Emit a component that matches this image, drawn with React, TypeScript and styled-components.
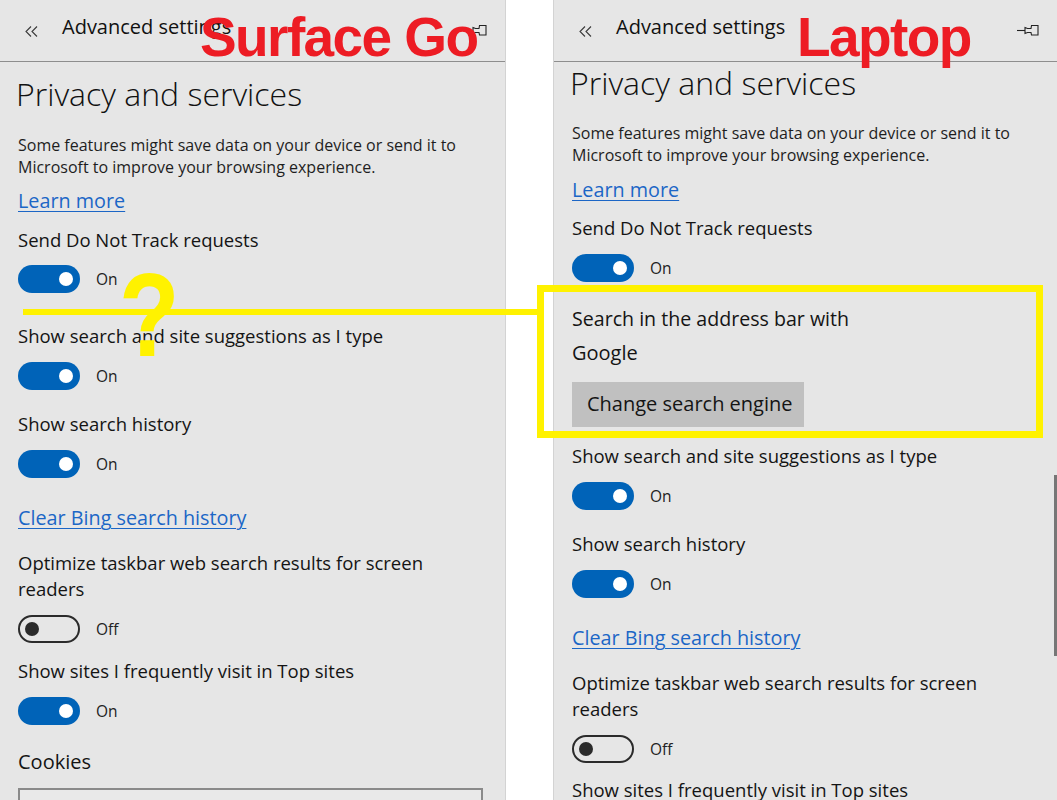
import React from "react";
import styled, { createGlobalStyle } from "styled-components";

const Global = createGlobalStyle`
  html, body { margin: 0; padding: 0; background: #ffffff; }
  body { font-family: "Open Sans", "Noto Sans", sans-serif; color: #111; }
`;

const Stage = styled.div`
  position: relative;
  width: 1057px;
  height: 800px;
  overflow: hidden;
  display: flex;
  gap: 47px;
  background: #ffffff;
`;

const Panel = styled.section<{ $side: "left" | "right" }>`
  position: relative;
  flex: none;
  box-sizing: border-box;
  width: ${(p) => (p.$side === "left" ? "506px" : "504px")};
  height: 800px;
  overflow: hidden;
  background: #e6e6e6;
  ${(p) =>
    p.$side === "left"
      ? "border-right: 1px solid #d3d3d3;"
      : "border-left: 1px solid #d3d3d3;"}
`;

const Header = styled.header`
  height: 61px;
  display: flex;
  align-items: flex-start;
  padding: 0 18px 0 25px;
  border-bottom: 1px solid #8e8e8e;
`;

const BackIcon = styled.svg`
  flex: none;
  margin-top: 26px;
  width: 13px;
  height: 11px;
`;

const HeaderTitle = styled.div`
  margin: 13px 0 0 24px;
  font-size: 20px;
  line-height: 28px;
  color: #111;
  flex: 1;
`;

const PinIcon = styled.svg`
  flex: none;
  margin-top: 24px;
  width: 22px;
  height: 12px;
`;

const Body = styled.div`
  display: flex;
  flex-direction: column;
  align-items: flex-start;
  padding: 0 18px;
`;

const Title = styled.h2<{ $mt: number }>`
  margin: ${(p) => p.$mt}px 0 0 -2px;
  font-size: 32px;
  font-weight: 300;
  line-height: 40px;
  color: #111;
`;

const Description = styled.p<{ $mt: number }>`
  margin: ${(p) => p.$mt}px 0 0;
  font-size: 16px;
  line-height: 22px;
  color: #1e1e1e;
`;

const TextLink = styled.a<{ $mt: number }>`
  margin-top: ${(p) => p.$mt}px;
  font-size: 19.8px;
  line-height: 26px;
  color: #1c66c6;
  text-decoration: underline;
  text-decoration-thickness: 1px;
  text-underline-offset: 3px;
  cursor: pointer;
`;

const Label = styled.div<{ $mt: number; $size?: number }>`
  margin-top: ${(p) => p.$mt}px;
  font-size: ${(p) => p.$size ?? 18.5}px;
  line-height: 26px;
  color: #141414;
`;

const ToggleRow = styled.div<{ $mt: number }>`
  margin-top: ${(p) => p.$mt}px;
  height: 28px;
  display: flex;
  align-items: center;
  gap: 16px;
`;

const Switch = styled.span<{ $on: boolean }>`
  position: relative;
  box-sizing: border-box;
  width: 62px;
  height: 28px;
  border-radius: 14px;
  background: ${(p) => (p.$on ? "#0063b8" : "transparent")};
  border: ${(p) => (p.$on ? "none" : "2.5px solid #2b2b2b")};
  &::after {
    content: "";
    position: absolute;
    top: 50%;
    width: 14px;
    height: 14px;
    margin-top: -7px;
    border-radius: 50%;
    background: ${(p) => (p.$on ? "#ffffff" : "#2b2b2b")};
    ${(p) => (p.$on ? "right: 7px;" : "left: 5px;")}
  }
`;

const StateText = styled.span`
  font-size: 15.5px;
  line-height: 20px;
  color: #222;
`;

const GrayButton = styled.button<{ $mt: number }>`
  margin-top: ${(p) => p.$mt}px;
  height: 45px;
  width: 232px;
  padding: 0 0 2px 15px;
  text-align: left;
  border: none;
  background: #c0c0c0;
  font-family: "Open Sans", "Noto Sans", sans-serif;
  font-size: 20px;
  color: #141414;
`;

const SelectBox = styled.div<{ $mt: number }>`
  margin-top: ${(p) => p.$mt}px;
  box-sizing: border-box;
  width: 465px;
  height: 40px;
  border: 2px solid #8a8a8a;
  background: #e9e9e9;
`;

const ScrollThumb = styled.div`
  position: absolute;
  right: 0;
  top: 475px;
  width: 3px;
  height: 181px;
  background: #767676;
`;

const RedNote = styled.div<{ $x: number }>`
  position: absolute;
  left: ${(p) => p.$x}px;
  top: 10px;
  font-family: "Liberation Sans", Arial, sans-serif;
  font-weight: 700;
  font-size: 55px;
  line-height: 55px;
  letter-spacing: -1.6px;
  color: #ed1c24;
  white-space: nowrap;
`;

const QuestionMark = styled.div`
  position: absolute;
  left: 119px;
  top: 256px;
  font-family: "Liberation Sans", Arial, sans-serif;
  font-weight: 700;
  font-size: 118px;
  line-height: 118px;
  color: #fff200;
  transform: scaleX(0.84);
  transform-origin: left top;
`;

const YellowLine = styled.div`
  position: absolute;
  left: 23px;
  top: 309px;
  width: 516px;
  height: 6px;
  background: #fff200;
`;

const YellowFrame = styled.div`
  position: absolute;
  left: 537px;
  top: 285px;
  width: 506px;
  height: 153px;
  box-sizing: border-box;
  border: 7px solid #fff200;
`;

type Item =
  | { kind: "title"; mt: number }
  | { kind: "desc"; mt: number }
  | { kind: "link"; mt: number; text: string }
  | { kind: "label"; mt: number; text: string; size?: number }
  | { kind: "toggle"; mt: number; on: boolean }
  | { kind: "button"; mt: number; text: string }
  | { kind: "select"; mt: number };

const leftItems: Item[] = [
  { kind: "title", mt: 12 },
  { kind: "desc", mt: 20 },
  { kind: "link", mt: 10, text: "Learn more" },
  { kind: "label", mt: 13, text: "Send Do Not Track requests" },
  { kind: "toggle", mt: 12, on: true },
  { kind: "label", mt: 30, text: "Show search and site suggestions as I type" },
  { kind: "toggle", mt: 13, on: true },
  { kind: "label", mt: 21, text: "Show search history" },
  { kind: "toggle", mt: 13, on: true },
  { kind: "link", mt: 27, text: "Clear Bing search history" },
  { kind: "label", mt: 19, text: "Optimize taskbar web search results for screen readers" },
  { kind: "toggle", mt: 13, on: false },
  { kind: "label", mt: 15, text: "Show sites I frequently visit in Top sites" },
  { kind: "toggle", mt: 13, on: true },
  { kind: "label", mt: 24, text: "Cookies", size: 20 },
  { kind: "select", mt: 13 },
];

const rightItems: Item[] = [
  { kind: "title", mt: 1 },
  { kind: "desc", mt: 19 },
  { kind: "link", mt: 11, text: "Learn more" },
  { kind: "label", mt: 12, text: "Send Do Not Track requests" },
  { kind: "toggle", mt: 13, on: true },
  { kind: "label", mt: 24, text: "Search in the address bar with", size: 19.6 },
  { kind: "label", mt: 8, text: "Google", size: 20 },
  { kind: "button", mt: 16, text: "Change search engine" },
  { kind: "label", mt: 16, text: "Show search and site suggestions as I type" },
  { kind: "toggle", mt: 13, on: true },
  { kind: "label", mt: 21, text: "Show search history" },
  { kind: "toggle", mt: 13, on: true },
  { kind: "link", mt: 27, text: "Clear Bing search history" },
  { kind: "label", mt: 19, text: "Optimize taskbar web search results for screen readers" },
  { kind: "toggle", mt: 13, on: false },
  { kind: "label", mt: 14, text: "Show sites I frequently visit in Top sites" },
  { kind: "toggle", mt: 13, on: true },
];

function renderItem(item: Item, i: number) {
  switch (item.kind) {
    case "title":
      return (
        <Title key={i} $mt={item.mt}>
          Privacy and services
        </Title>
      );
    case "desc":
      return (
        <Description key={i} $mt={item.mt}>
          Some features might save data on your device or send it to
          <br />
          Microsoft to improve your browsing experience.
        </Description>
      );
    case "link":
      return (
        <TextLink key={i} $mt={item.mt}>
          {item.text}
        </TextLink>
      );
    case "label":
      if (item.text.startsWith("Optimize")) {
        return (
          <Label key={i} $mt={item.mt}>
            Optimize taskbar web search results for screen
            <br />
            readers
          </Label>
        );
      }
      return (
        <Label key={i} $mt={item.mt} $size={item.size}>
          {item.text}
        </Label>
      );
    case "toggle":
      return (
        <ToggleRow key={i} $mt={item.mt}>
          <Switch $on={item.on} />
          <StateText>{item.on ? "On" : "Off"}</StateText>
        </ToggleRow>
      );
    case "button":
      return (
        <GrayButton key={i} $mt={item.mt}>
          {item.text}
        </GrayButton>
      );
    case "select":
      return <SelectBox key={i} $mt={item.mt} />;
  }
}

function PanelHeader() {
  return (
    <Header>
      <BackIcon viewBox="0 0 13 11" fill="none" stroke="#3a3a3a" strokeWidth="1.1">
        <polyline points="6,0.5 1,5.5 6,10.5" />
        <polyline points="12,0.5 7,5.5 12,10.5" />
      </BackIcon>
      <HeaderTitle>Advanced settings</HeaderTitle>
      <PinIcon viewBox="0 0 22 12" fill="none" stroke="#222" strokeWidth="1.1">
        <line x1="0" y1="6.5" x2="8" y2="6.5" />
        <path d="M8 3.5 L10.5 4.5 L14 4.5 L14.5 1.5 L21 1.5 L21 11 L14.5 11 L14 8.5 L10.5 8.5 L8 9.5 Z" />
      </PinIcon>
    </Header>
  );
}

export default function App() {
  return (
    <>
      <Global />
      <Stage>
        <Panel $side="left">
          <PanelHeader />
          <Body>{leftItems.map(renderItem)}</Body>
        </Panel>
        <Panel $side="right">
          <PanelHeader />
          <Body>{rightItems.map(renderItem)}</Body>
          <ScrollThumb />
        </Panel>
        <RedNote $x={200}>Surface Go</RedNote>
        <RedNote $x={797}>Laptop</RedNote>
        <YellowLine />
        <QuestionMark>?</QuestionMark>
        <YellowFrame />
      </Stage>
    </>
  );
}
